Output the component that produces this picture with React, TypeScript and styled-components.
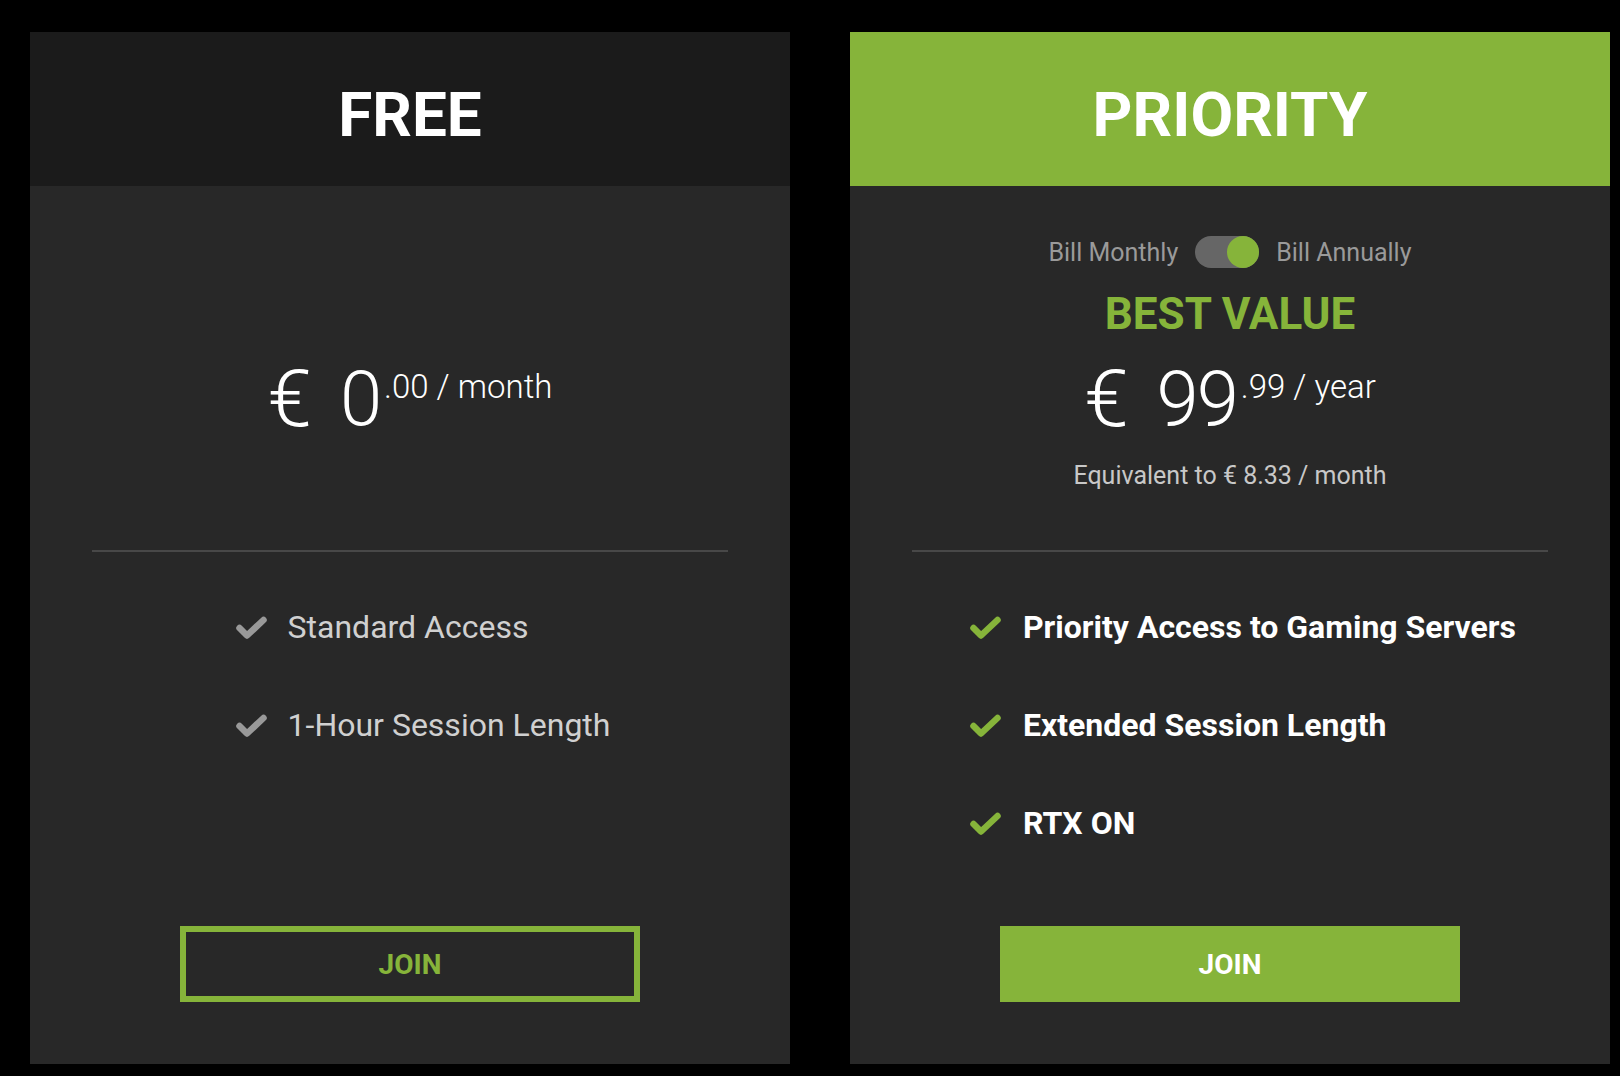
import React from 'react';
import styled, { createGlobalStyle } from 'styled-components';

const GREEN = '#86b43a';

const GlobalStyle = createGlobalStyle`
  html, body {
    margin: 0;
    padding: 0;
    background: #000;
  }
  body {
    font-family: Roboto, "Liberation Sans", sans-serif;
  }
`;

const Page = styled.div`
  display: flex;
  gap: 60px;
  padding: 32px 10px 12px 30px;
  background: #000;
`;

const Card = styled.div`
  width: 760px;
  height: 1032px;
  display: flex;
  flex-direction: column;
  background: #282828;
`;

const Header = styled.div<{ $featured?: boolean }>`
  height: 154px;
  box-sizing: border-box;
  padding-top: 12px;
  display: flex;
  align-items: center;
  justify-content: center;
  background: ${p => (p.$featured ? GREEN : '#1b1b1b')};
`;

const Title = styled.h2`
  margin: 0;
  font-size: 62px;
  line-height: 1;
  font-weight: 700;
  color: #fff;
`;

const Body = styled.div`
  flex: 1;
  display: flex;
  flex-direction: column;
  padding: 0 62px 62px;
`;

const Top = styled.div`
  height: 364px;
  display: flex;
  flex-direction: column;
  align-items: center;
`;

const BillingRow = styled.div`
  margin-top: 50px;
  height: 32px;
  display: flex;
  align-items: center;
  gap: 17px;
`;

const BillLabel = styled.span`
  font-size: 25px;
  line-height: 1;
  color: #9a9a9a;
`;

const Toggle = styled.div`
  width: 64px;
  height: 32px;
  border-radius: 16px;
  background: #666;
  display: flex;
  justify-content: flex-end;
`;

const Knob = styled.div`
  width: 32px;
  height: 32px;
  border-radius: 50%;
  background: ${GREEN};
`;

const BestValue = styled.div`
  margin-top: 24px;
  font-size: 44px;
  line-height: 1;
  font-weight: 700;
  color: ${GREEN};
`;

const PriceRow = styled.div<{ $offset: number }>`
  margin-top: ${p => p.$offset}px;
  display: flex;
  align-items: flex-start;
  color: #fff;
  font-weight: 300;
`;

const Currency = styled.span`
  margin-right: 28px;
  font-size: 80px;
  line-height: 76px;
`;

const Amount = styled.span`
  font-size: 76px;
  line-height: 1;
  letter-spacing: -2px;
`;

const Suffix = styled.span`
  margin-top: 9px;
  margin-left: 4px;
  font-size: 33px;
  line-height: 1;
  white-space: pre;
`;

const Equivalent = styled.div`
  margin-top: 26px;
  font-size: 25px;
  line-height: 1;
  color: #c8c8c8;
`;

const Divider = styled.hr`
  margin: 0;
  border: 0;
  height: 2px;
  background: #484848;
`;

const Features = styled.ul`
  list-style: none;
  margin: 0;
  padding: 55px 0 0 24px;
  align-self: center;
  display: flex;
  flex-direction: column;
  gap: 58px;
`;

const Feature = styled.li<{ $featured?: boolean }>`
  height: 40px;
  display: flex;
  align-items: center;
  gap: ${p => (p.$featured ? 22 : 21)}px;
  font-size: ${p => (p.$featured ? 32 : 32)}px;
  line-height: 40px;
  font-weight: ${p => (p.$featured ? 700 : 400)};
  color: ${p => (p.$featured ? '#fff' : '#d0d0d0')};
  white-space: nowrap;
`;

const CheckIcon = styled.svg`
  flex: none;
  width: 33px;
  height: 24px;
`;

const JoinButton = styled.button<{ $featured?: boolean }>`
  margin-top: auto;
  align-self: center;
  width: 460px;
  height: 76px;
  box-sizing: border-box;
  border: 6px solid ${GREEN};
  background: ${p => (p.$featured ? GREEN : 'transparent')};
  color: ${p => (p.$featured ? '#fff' : GREEN)};
  font-family: inherit;
  font-size: 28px;
  font-weight: 700;
  cursor: pointer;
`;

const Check = ({ color }: { color: string }) => (
  <CheckIcon viewBox="0 0 33 24">
    <polyline
      points="5.5,13 13,20.5 29.5,5"
      fill="none"
      stroke={color}
      strokeWidth="6.5"
      strokeLinecap="round"
      strokeLinejoin="round"
    />
  </CheckIcon>
);

interface Plan {
  name: string;
  featured: boolean;
  whole: string;
  suffix: string;
  equivalent?: string;
  features: string[];
}

const plans: Plan[] = [
  {
    name: 'FREE',
    featured: false,
    whole: '0',
    suffix: '.00 / month',
    features: ['Standard Access', '1-Hour Session Length'],
  },
  {
    name: 'PRIORITY',
    featured: true,
    whole: '99',
    suffix: '.99 / year',
    equivalent: 'Equivalent to € 8.33 / month',
    features: ['Priority Access to Gaming Servers', 'Extended Session Length', 'RTX ON'],
  },
];

const PlanCard = ({ plan }: { plan: Plan }) => (
  <Card>
    <Header $featured={plan.featured}>
      <Title>{plan.name}</Title>
    </Header>
    <Body>
      <Top>
        {plan.featured && (
          <>
            <BillingRow>
              <BillLabel>Bill Monthly</BillLabel>
              <Toggle>
                <Knob />
              </Toggle>
              <BillLabel>Bill Annually</BillLabel>
            </BillingRow>
            <BestValue>BEST VALUE</BestValue>
          </>
        )}
        <PriceRow $offset={plan.featured ? 25 : 175}>
          <Currency>€</Currency>
          <Amount>{plan.whole}</Amount>
          <Suffix>{plan.suffix}</Suffix>
        </PriceRow>
        {plan.equivalent && <Equivalent>{plan.equivalent}</Equivalent>}
      </Top>
      <Divider />
      <Features>
        {plan.features.map(f => (
          <Feature key={f} $featured={plan.featured}>
            <Check color={plan.featured ? GREEN : '#999'} />
            {f}
          </Feature>
        ))}
      </Features>
      <JoinButton $featured={plan.featured}>JOIN</JoinButton>
    </Body>
  </Card>
);

export default function App() {
  return (
    <>
      <GlobalStyle />
      <Page>
        {plans.map(p => (
          <PlanCard key={p.name} plan={p} />
        ))}
      </Page>
    </>
  );
}
